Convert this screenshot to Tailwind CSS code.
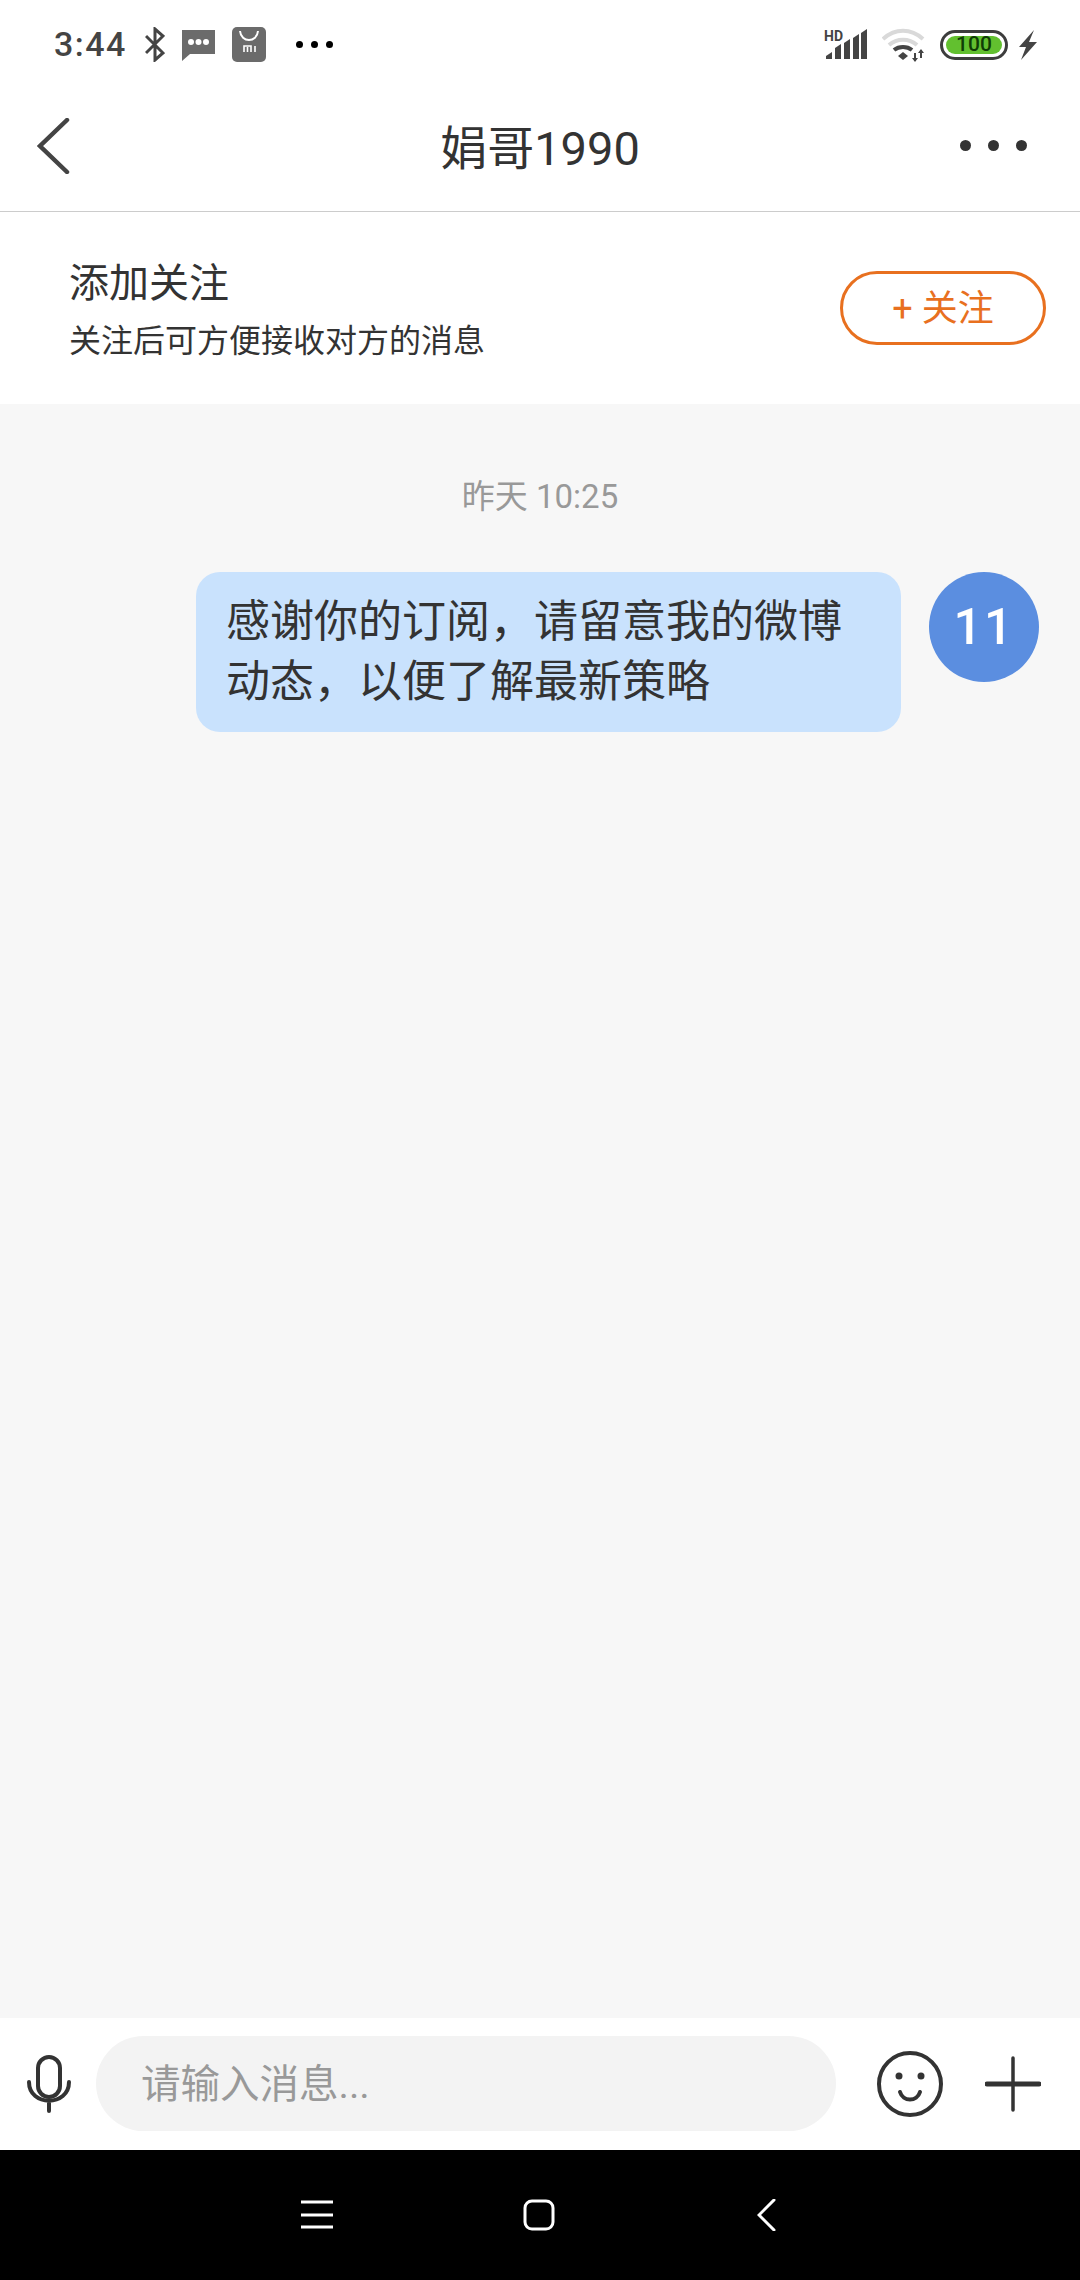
<!DOCTYPE html>
<html lang="zh-CN">
<head>
    <meta charset="UTF-8">
    <meta name="viewport" content="width=device-width, initial-scale=1.0">
    <title>娟哥1990</title>
    <script src="https://cdn.jsdelivr.net/npm/@tailwindcss/browser@4"></script>
</head>
<body class="w-[1080px] h-[2280px] flex flex-col bg-white overflow-hidden font-['Roboto','Noto_Sans_CJK_SC',sans-serif] text-[#333]">
    <!-- status bar -->
    <div class="h-[88px] shrink-0 flex items-start justify-between pt-[27px]">
        <div class="flex items-center h-[35px] pl-[54px]">
            <span class="text-[34px] leading-[35px] tracking-[1.5px] font-medium text-[#444] w-[91px]">3:44</span>
            <svg class="w-[20px] h-[35px]" viewBox="0 0 20 35" fill="none" stroke="#444" stroke-width="3"><path d="M1 9l17 17-8 7V2l8 7L1 26"/></svg>
            <svg class="w-[33px] h-[32px] ml-[17px]" viewBox="0 0 33 32"><path d="M0 1h33v24H8l-8 7z" fill="#6b6b6b"/><circle cx="9" cy="13" r="3" fill="#fff"/><circle cx="16.500" cy="13" r="3" fill="#fff"/><circle cx="24" cy="13" r="3" fill="#fff"/></svg>
            <svg class="w-[34px] h-[35px] ml-[17px]" viewBox="0 0 34 35"><rect width="34" height="35" rx="5" fill="#6b6b6b"/><path d="M8 4c1 12 17 12 18 0" fill="none" stroke="#fff" stroke-width="2"/><path d="M12 25v-6h7v6M15.500 20v5M23 19v6" fill="none" stroke="#fff" stroke-width="1.600"/></svg>
            <div class="flex gap-[8px] ml-[30px]">
                <span class="w-[7px] h-[7px] rounded-full bg-black"></span>
                <span class="w-[7px] h-[7px] rounded-full bg-black"></span>
                <span class="w-[7px] h-[7px] rounded-full bg-black"></span>
            </div>
        </div>
        <div class="flex items-center h-[35px] pr-[42px]">
            <div class="relative w-[44px] h-[32px]">
                <span class="absolute left-0 top-[1px] text-[14px] leading-[12px] font-bold text-[#444]">HD</span>
                <svg class="w-[44px] h-[32px]" viewBox="0 0 44 32" fill="#444">
                    <path d="M2 30v-3l6-4v7zM11 30V19l6-4v15zM20 30V14l6-4v20zM29 30V9l6-4v25zM37 30V4l6-4v30z"/>
                </svg>
            </div>
            <svg class="w-[44px] h-[34px] ml-[14px]" viewBox="0 0 44 34" fill="none" stroke-width="4">
                <path d="M1 11c12-11 28-11 40 0" stroke="#d9d9d9"/>
                <path d="M7 17c8-7 20-7 28 0" stroke="#d9d9d9"/>
                <path d="M12 22c5-4 13-4 18 0" stroke="#444"/>
                <path d="M16 28l5-4 5 4-5 4z" fill="#444" stroke="none"/>
                <path d="M33 25v8M39 22v8" stroke="#444" stroke-width="2"/>
                <path d="M30 30l3 4 3-4zM36 25l3-4 3 4z" fill="#444" stroke="none"/>
            </svg>
            <div class="relative w-[68px] h-[30px] ml-[14px] rounded-full border-[3px] border-[#3d3d3d] p-[3px]">
                <div class="h-full rounded-full bg-[#62c02f] flex items-center justify-center text-[21px] font-medium leading-none text-[#0f3d05]">100</div>
            </div>
            <svg class="w-[20px] h-[30px] ml-[10px]" viewBox="0 0 20 30" fill="#444"><path d="M16 0L1 17h7l-5 13 16-18h-8z"/></svg>
        </div>
    </div>

    <!-- title bar -->
    <div class="h-[124px] shrink-0 flex items-center justify-between border-b border-[#ccc] relative">
        <svg class="w-[34px] h-[56px] ml-[37px] -mt-[8px]" viewBox="0 0 34 56" fill="none" stroke="#444" stroke-width="4.500" stroke-linecap="round"><path d="M30 2L3 28l27 26"/></svg>
        <div class="absolute left-0 right-0 top-[0px] h-[112px] flex items-center justify-center text-[47px] pt-[10px]">娟哥1990</div>
        <div class="flex gap-[17px] mr-[53px] -mt-[8px]">
            <span class="w-[11px] h-[11px] rounded-full bg-[#333]"></span>
            <span class="w-[11px] h-[11px] rounded-full bg-[#333]"></span>
            <span class="w-[11px] h-[11px] rounded-full bg-[#333]"></span>
        </div>
    </div>

    <!-- follow banner -->
    <div class="h-[192px] shrink-0 flex items-center justify-between pl-[69px] pr-[34px]">
        <div class="pt-[7px]">
            <div class="text-[40px] leading-[48px] text-[#333]">添加关注</div>
            <div class="text-[32px] leading-[44px] mt-[11px] text-[#333]">关注后可方便接收对方的消息</div>
        </div>
        <div class="w-[206px] h-[74px] rounded-full border-[3px] border-[#e8701f] flex items-center justify-center text-[36px] leading-[40px] pt-[2px] text-[#e8701f]">+ 关注</div>
    </div>

    <!-- messages -->
    <div class="flex-1 bg-[#f7f7f7] flex flex-col">
        <div class="text-center text-[33px] leading-[40px] text-[#999] mt-[73px]">昨天 10:25</div>
        <div class="flex justify-end items-start gap-[28px] mt-[55px] pr-[41px]">
            <div class="w-[705px] h-[160px] rounded-[24px] bg-[#c9e2fd] pl-[30px] py-[20px] text-[44px] leading-[60px] text-[#333]">感谢你的订阅&#xFF0C;请留意我的微博<br>动态&#xFF0C;以便了解最新策略</div>
            <div class="w-[110px] h-[110px] rounded-full bg-[#5b8ee0] flex items-center justify-center text-white font-medium text-[50px] tracking-[2px]">11</div>
        </div>
    </div>

    <!-- input bar -->
    <div class="h-[132px] shrink-0 flex items-center">
        <svg class="w-[44px] h-[58px] ml-[27px]" viewBox="0 0 44 58" fill="none" stroke="#333" stroke-width="4" stroke-linecap="round">
            <rect x="11" y="2" width="22" height="40" rx="11"/>
            <path d="M2 27c0 25 40 25 40 0M22 46v10"/>
        </svg>
        <div class="w-[740px] h-[95px] ml-[25px] -mt-[1px] rounded-full bg-[#f3f3f3] flex items-center pl-[45px] text-[39.500px] text-[#999] pt-[2px]">请输入消息...</div>
        <svg class="w-[66px] h-[66px] ml-[41px]" viewBox="0 0 66 66" fill="none" stroke="#333" stroke-width="4">
            <circle cx="33" cy="33" r="31"/>
            <circle cx="22" cy="25" r="3.500" fill="#333" stroke="none"/>
            <circle cx="44" cy="25" r="3.500" fill="#333" stroke="none"/>
            <path d="M23 41c3 10 17 10 20 0" stroke-linecap="round"/>
        </svg>
        <svg class="w-[56px] h-[56px] ml-[42px]" viewBox="0 0 56 56" fill="none" stroke="#333" stroke-linecap="round">
            <path d="M2 28h52" stroke-width="5"/>
            <path d="M28 2v52" stroke-width="3.500"/>
        </svg>
    </div>

    <!-- nav bar -->
    <div class="h-[130px] shrink-0 bg-black flex items-start pt-[49px]">
        <svg class="w-[32px] h-[32px] ml-[301px]" viewBox="0 0 32 32" stroke="#fff" stroke-width="3"><path d="M0 3h32M0 16h32M0 28h32"/></svg>
        <svg class="w-[32px] h-[32px] ml-[190px]" viewBox="0 0 32 32" fill="none" stroke="#fff" stroke-width="3"><rect x="2" y="2" width="28" height="28" rx="7"/></svg>
        <svg class="w-[20px] h-[32px] ml-[202px]" viewBox="0 0 20 32" fill="none" stroke="#fff" stroke-width="3" stroke-linecap="round"><path d="M17 1L2 16l15 15"/></svg>
    </div>
</body>
</html>
